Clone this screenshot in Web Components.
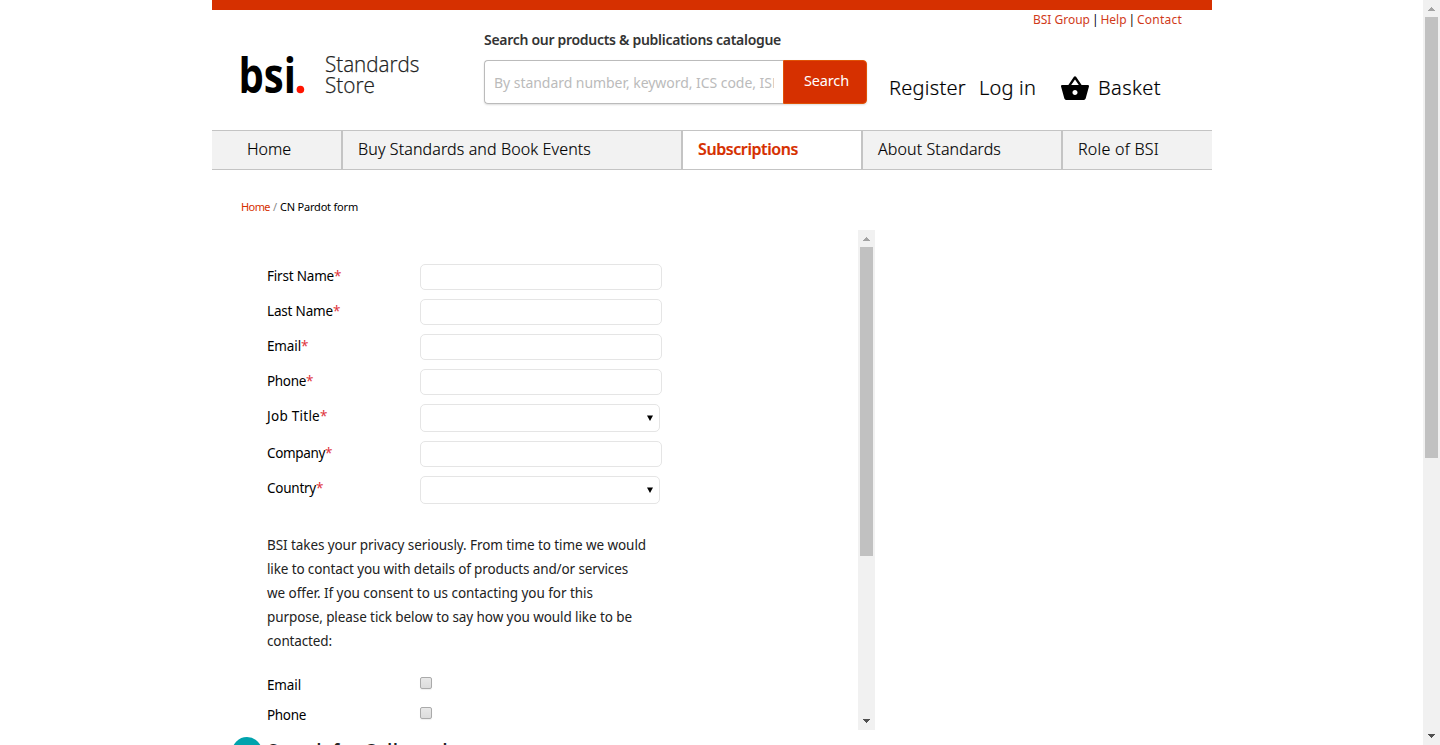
<!DOCTYPE html>
<html lang="en">
<head>
<meta charset="utf-8">
<title>BSI Standards Store</title>
<style>
body{margin:0;background:#fff;color:#000;font-family:"Noto Sans","Open Sans",sans-serif;overflow:hidden;height:745px}
</style>
</head>
<body>
<bsi-page></bsi-page>
<script>
const define=(name,html,init)=>{
  customElements.define(name,class extends HTMLElement{
    connectedCallback(){
      if(this.shadowRoot)return;
      const t=document.createElement('template');
      t.innerHTML=html;
      this.attachShadow({mode:'open'}).append(t.content.cloneNode(true));
      if(init)init.call(this,this.shadowRoot);
    }
  });
};

/* One line of text tracked out to a given measure. */
define('fit-text','<style>:host{display:inline-block;white-space:pre}span{display:inline-block}</style><span><slot></slot></span>',function(r){
  const s=r.querySelector('span'),w=+this.getAttribute('w'),n=this.textContent.length;
  this.style.width=w+'px';
  const nat=s.getBoundingClientRect().width;
  s.style.letterSpacing=((w-nat)/n).toFixed(3)+'px';
});

define('scroll-rail',`<style>
:host{display:flex;flex-direction:column;width:17px;background:#f1f1f1;align-items:center;flex:none}
svg{width:17px;height:17px;flex:none;display:block}
.thumb{width:13px;background:#c1c1c1;flex:none}.sp{flex:1}
</style><svg viewBox="0 0 17 17" shape-rendering="crispEdges"><path d="M8 7h1v1h1v1h1v1h1v1H5v-1h1V9h1V8h1z" fill="#a3a3a3"/></svg><div class="thumb"></div><div class="sp"></div>
<svg viewBox="0 0 17 17" shape-rendering="crispEdges"><path d="M5 6h7v1h-1v1h-1v1H9v1H8V9H7V8H6V7H5z" fill="#505050"/></svg>`,function(r){
  r.querySelector('.thumb').style.height=this.getAttribute('thumb')+'px';
});

define('bsi-logo',`<style>
:host{display:block;height:50px;width:190px}
svg{display:block;overflow:visible}
text{font-family:"Open Sans","Noto Sans",sans-serif}
</style><svg width="190" height="50" viewBox="0 0 190 50">
<text x="-3.500" y="42" font-size="49" font-weight="700" textLength="57.5" lengthAdjust="spacingAndGlyphs">bsi</text>
<circle cx="58.400" cy="38.500" r="3.800" fill="#ff1400"/>
<g font-weight="300" font-size="22.500" fill="#222" stroke="#222" stroke-width=".25"><text x="83" y="21" textLength="94.500" lengthAdjust="spacingAndGlyphs">Standards</text>
<text x="83" y="42" textLength="50" lengthAdjust="spacingAndGlyphs">Store</text></g></svg>`);

define('search-box',`<style>
:host{display:block;width:383px}
h2{margin:0;font:600 14px/20px "Noto Sans",sans-serif;color:#333}
.row{display:flex;margin-top:10px;height:44px;border-radius:4px;box-shadow:0 1px 2px #0002}
.in{box-sizing:border-box;width:299px;border:1px solid #bbb;border-right:0;border-radius:4px 0 0 4px;padding:0 9px;color:#bbb;font-size:14px;line-height:44px}
.clip{width:280px;overflow:hidden;height:42px}
.btn{box-sizing:border-box;width:84px;border:1px solid #e05206;border-radius:0 4px 4px 0;background:#d63000;color:#fff;font-size:14.500px;line-height:39px;padding-left:20px}
</style><h2><fit-text w="297">Search our products &amp; publications catalogue</fit-text></h2>
<div class="row"><div class="in"><div class="clip"><fit-text w="287">By standard number, keyword, ICS code, ISB</fit-text></div></div><div class="btn"><fit-text w="45">Search</fit-text></div></div>`);

define('site-header',`<style>
:host{display:block;border-top:10px solid #d63000;height:120px}
.g{display:grid;grid-template-columns:272px 405px 1fr;height:120px}
bsi-logo{margin:41px 0 0 30px}
search-box{margin-top:20px}
.r{display:flex;flex-direction:column}
.links{display:flex;gap:4px;margin-left:144px;font-size:12px;line-height:20px;color:#d03a1a}
.links i{font-style:normal;color:#000;width:2.500px;text-indent:-2px}
.acct{display:flex;align-items:center;margin-top:43px;height:30px;font-size:20px;line-height:30px;font-weight:300;-webkit-text-stroke:.2px #000}
svg{margin:-1px 9px 0 25px;width:28px;height:24px}
.l{margin-left:13px}
</style><div class="g"><bsi-logo></bsi-logo><search-box></search-box><div class="r">
<div class="links"><fit-text w="57">BSI Group</fit-text><i>|</i><fit-text w="26">Help</fit-text><i>|</i><fit-text w="45">Contact</fit-text></div>
<div class="acct"><fit-text w="77">Register</fit-text><fit-text class="l" w="57">Log in</fit-text>
<svg viewBox="1 1.8 22 19.2" preserveAspectRatio="none"><path d="M17.21 9l-4.38-6.56c-.19-.28-.51-.42-.83-.42-.32 0-.64.14-.83.43L6.79 9H2c-.55 0-1 .45-1 1 0 .09.01.18.04.27l2.54 9.27c.23.84 1 1.46 1.92 1.46h13c.92 0 1.69-.62 1.93-1.46l2.54-9.27L23 10c0-.55-.45-1-1-1h-4.790zM9 9l3-4.400L15 9H9zm3 8c-1.100 0-2-.9-2-2s.9-2 2-2 2 .9 2 2-.9 2-2 2z"/></svg><fit-text w="63">Basket</fit-text></div></div></div>`);

define('main-nav',`<style>
:host{display:grid;grid-template-columns:129px 340px 180px 200px 151px;height:38px;border:solid #c4c4c4;border-width:1px 0;background:#f2f2f2;font-size:16px;line-height:37px;font-weight:300;-webkit-text-stroke:.15px}
div{padding-left:15px;border-left:2px solid #c4c4c4}
div:first-of-type{padding-left:35px;border:0}
.on{background:#fff;color:#d63000;font-weight:600}
</style><div><fit-text w="44">Home</fit-text></div><div><fit-text w="233">Buy Standards and Book Events</fit-text></div><div class="on"><fit-text w="100">Subscriptions</fit-text></div><div><fit-text w="123">About Standards</fit-text></div><div><fit-text w="81">Role of BSI</fit-text></div>`);

define('form-row',`<style>
:host{display:grid;grid-template-columns:153px 1fr;height:35px;font-size:13.500px;line-height:24px}
:host([kind=select]){height:37px}
.label{display:flex}.star{color:#e0343c}
.field{box-sizing:border-box;width:242px;height:26px;border:1px solid #e5e5e5;border-radius:5px;display:flex;align-items:center;justify-content:flex-end}
svg{display:none;width:6px;height:6px;margin-right:6px}
:host([kind=select]) .field{width:240px;height:28px}
:host([kind=select]) svg{display:block}
:host([kind=check]){height:30px}
:host([kind=check]) .star{display:none}
:host([kind=check]) .field{width:12px;height:12px;margin-top:4px;border-color:#aaa;border-radius:2px;background:linear-gradient(#e8e8e8,#dcdcdc);box-shadow:0 1px 1px #0001}
</style><div class="label"><slot></slot><span class="star">*</span></div><div class="field"><svg viewBox="0 0 6 6"><path d="M0 .5h6L3 6z"/></svg></div>`);

define('pardot-form',`<style>
:host{display:flex;width:663px;height:500px;justify-content:space-between;overflow:hidden}
.f{padding:34px 0 0 55px;width:480px}
.p{margin:29px 0 20px;font-size:13.500px;line-height:24px;color:#222;display:flex;flex-direction:column}
</style><div class="f">
<form-row><fit-text w="67">First Name</fit-text></form-row>
<form-row><fit-text w="66">Last Name</fit-text></form-row>
<form-row><fit-text w="34">Email</fit-text></form-row>
<form-row><fit-text w="39">Phone</fit-text></form-row>
<form-row kind="select"><fit-text w="53">Job Title</fit-text></form-row>
<form-row><fit-text w="58">Company</fit-text></form-row>
<form-row kind="select" style="height:28px"><fit-text w="49">Country</fit-text></form-row>
<div class="p"><fit-text w="379">BSI takes your privacy seriously. From time to time we would</fit-text><fit-text w="361">like to contact you with details of products and/or services</fit-text><fit-text w="326">we offer. If you consent to us contacting you for this</fit-text><fit-text w="365">purpose, please tick below to say how you would like to be</fit-text><fit-text w="65">contacted:</fit-text></div>
<form-row kind="check"><fit-text w="34">Email</fit-text></form-row>
<form-row kind="check"><fit-text w="39">Phone</fit-text></form-row>
</div><scroll-rail thumb="309"></scroll-rail>`);

define('next-heading',`<style>
:host{display:flex;gap:6px;padding:7px 0 0 20px;height:8px;overflow:hidden}
.dot{width:30px;height:30px;border-radius:50%;background:#00a3ad;flex:none}
.t{font:600 17px/22px "Noto Sans",sans-serif;color:#222;margin-top:3px}
</style><div class="dot"></div><div class="t"><fit-text w="180">Search for Collected</fit-text></div>`);

define('bsi-page',`<style>
:host{display:grid;grid-template-columns:1fr 17px;height:745px;overflow:hidden}
.w{width:1000px;margin-left:212px;height:745px;overflow:hidden}
.bc{display:flex;height:20px;padding:27px 0 13px 29px;font-size:11px;line-height:20px}
.h{color:#d63000}.s{color:#888;width:10px;text-indent:3px}
pardot-form{height:500px}
</style><div class="w"><site-header></site-header><main-nav></main-nav>
<div class="bc"><fit-text class="h" w="29">Home</fit-text><span class="s">/</span><fit-text w="78">CN Pardot form</fit-text></div>
<pardot-form></pardot-form><next-heading></next-heading></div><scroll-rail thumb="441"></scroll-rail>`);
</script>
</body>
</html>
